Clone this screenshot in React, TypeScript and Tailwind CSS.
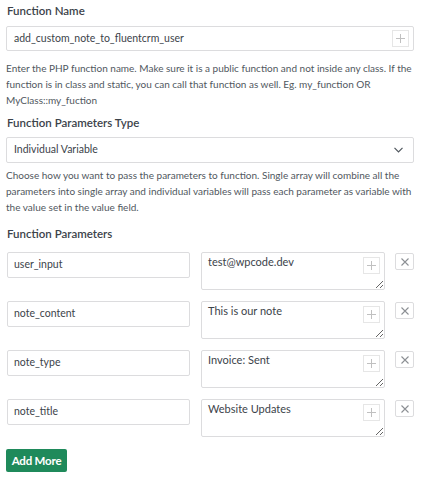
import React from "react";

const params = [
  { name: "user_input", value: "test@wpcode.dev" },
  { name: "note_content", value: "This is our note" },
  { name: "note_type", value: "Invoice: Sent" },
  { name: "note_title", value: "Website Updates" },
];

function PlusBtn({ className }: { className: string }) {
  return (
    <div className={`absolute flex items-center justify-center border border-[#e6e6e6] bg-white text-[#c0c0c0] ${className}`}>
      <svg width="9" height="9" viewBox="0 0 9 9" stroke="currentColor" strokeWidth="1">
        <path d="M4.5 0v9M0 4.5h9" />
      </svg>
    </div>
  );
}

export default function App() {
  return (
    <div className="bg-white min-h-[478px] pl-[6px] pr-[11px] pt-[3px] font-['Lato',sans-serif] text-[#3c434a]">
      <div className="text-[11.5px] leading-[16px] font-semibold text-[#3c434a] pl-[1px]">Function Name</div>
      <div className="relative mt-[7px] h-[25px] border border-[#dcdcde] rounded-[2px] flex items-center px-[7px] text-[10.5px] text-[#3c434a]">
        add_custom_note_to_fluentcrm_user
        <PlusBtn className="right-[4px] top-[3px] w-[17px] h-[17px]" />
      </div>
      <p className="mt-[9px] text-[10px] leading-[16px] text-[#50575e]">
        Enter the PHP function name. Make sure it is a public function and not inside any class. If the function is in class and static, you can call that function as well. Eg. my_function OR MyClass::my_fuction
      </p>

      <div className="mt-[7px] text-[11.5px] leading-[16px] font-semibold text-[#3c434a] pl-[1px]">Function Parameters Type</div>
      <div className="mt-[6px] h-[26px] border border-[#dcdcde] rounded-[2px] flex items-center justify-between pl-[7px] pr-[10px] text-[10.5px] text-[#3c434a]">
        <span>Individual Variable</span>
        <svg width="9" height="6" viewBox="0 0 9 6" fill="none" stroke="#50575e" strokeWidth="1.2">
          <path d="M0.5 0.8L4.5 4.8L8.5 0.8" />
        </svg>
      </div>
      <p className="mt-[4px] text-[10px] leading-[16px] text-[#50575e]">
        Choose how you want to pass the parameters to function. Single array will combine all the parameters into single array and individual variables will pass each parameter as variable with the value set in the value field.
      </p>

      <div className="mt-[11px] text-[11.5px] leading-[16px] font-semibold text-[#3c434a] pl-[1px]">Function Parameters</div>
      <div className="mt-[10px] flex flex-col gap-[11px]">
        {params.map((p) => (
          <div key={p.name} className="flex items-start pl-[1px]">
            <div className="w-[183px] h-[26px] border border-[#dcdcde] rounded-[2px] flex items-center px-[6px] text-[10.5px] text-[#3c434a]">
              {p.name}
            </div>
            <div className="relative ml-[11px] w-[184px] h-[38px]">
              <textarea
                readOnly
                defaultValue={p.value}
                className="block w-full h-full border border-[#dcdcde] rounded-[2px] px-[6px] pt-[1px] text-[11px] leading-[15px] text-[#3c434a] resize-y outline-none font-['Lato',sans-serif]"
              />
              <PlusBtn className="right-[5px] top-[5px] w-[17px] h-[17px]" />
            </div>
            <div className="ml-[10px] mt-[1px] w-[19px] h-[17px] border border-[#dcdcde] rounded-[2px] flex items-center justify-center text-[#8c8f94]">
              <svg width="8" height="8" viewBox="0 0 8 8" stroke="currentColor" strokeWidth="1.1">
                <path d="M0.5 0.5l7 7M7.5 0.5l-7 7" />
              </svg>
            </div>
          </div>
        ))}
      </div>
      <button className="mt-[12px] h-[23px] w-[61px] rounded-[2px] bg-[#1f8a5b] text-white text-[11.5px] font-bold font-['Lato',sans-serif] tracking-[-0.2px]">
        Add More
      </button>
    </div>
  );
}
